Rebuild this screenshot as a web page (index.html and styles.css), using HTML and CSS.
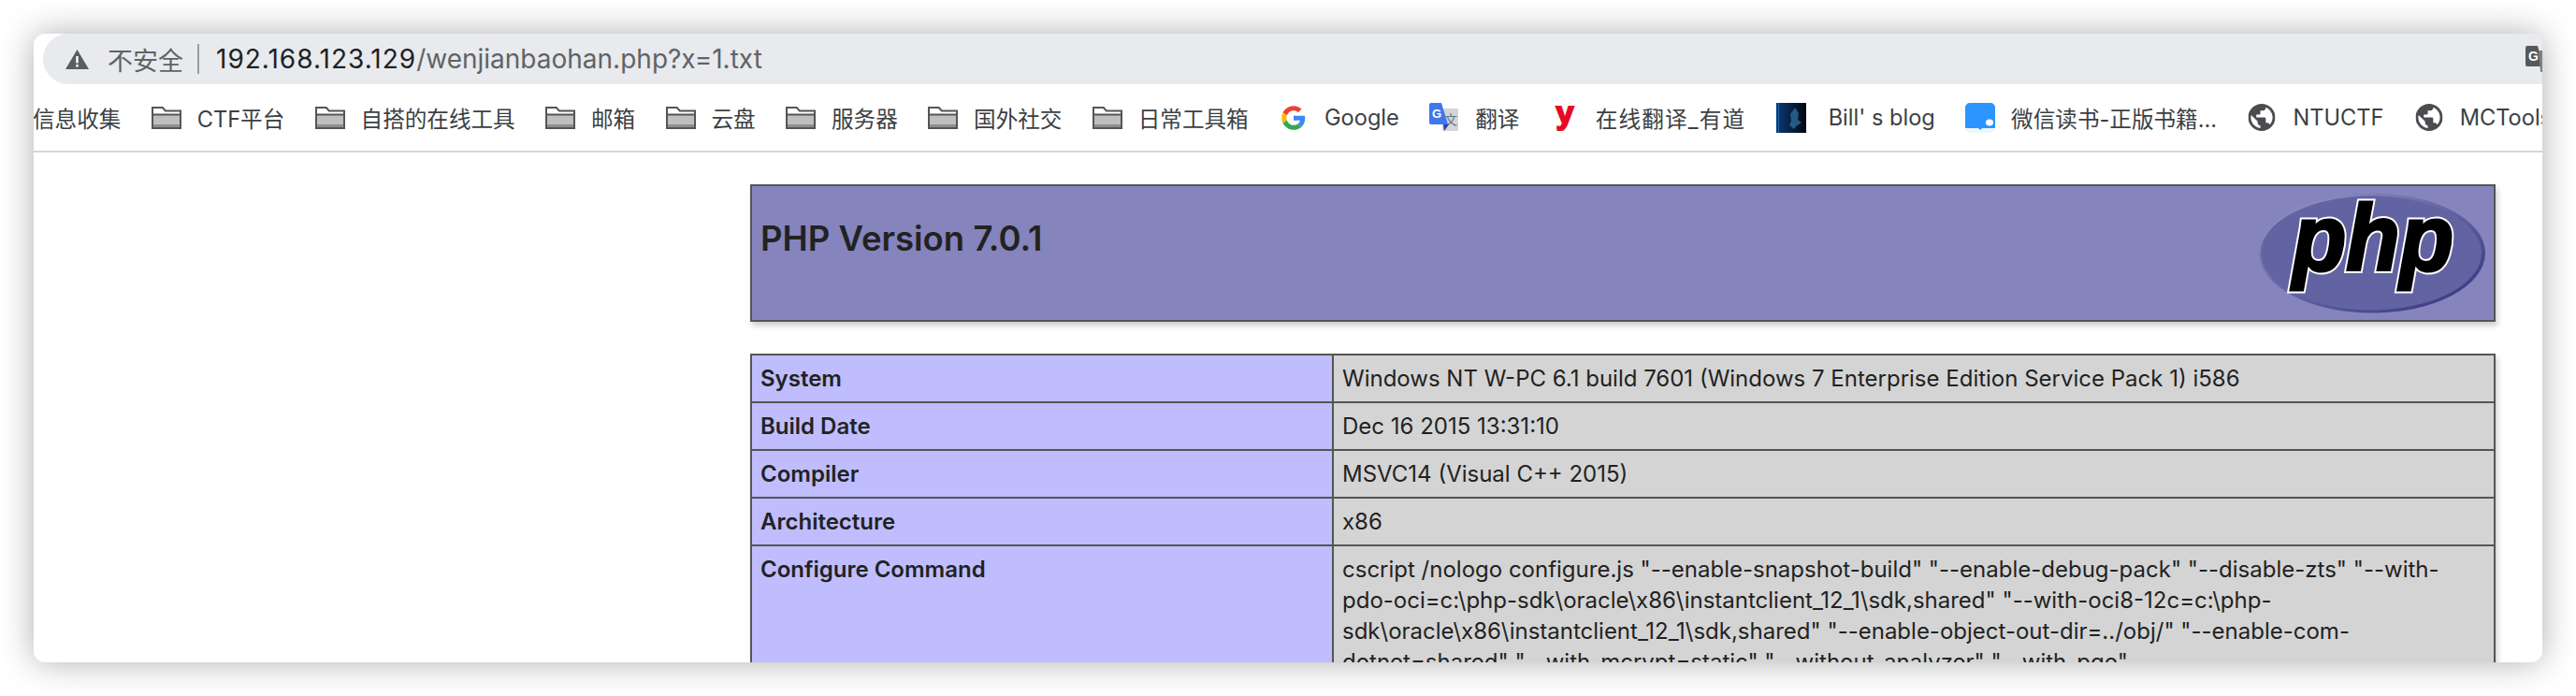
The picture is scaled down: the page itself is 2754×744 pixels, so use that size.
FILE: index.html
```html
<!DOCTYPE html>
<html lang="zh-CN">

<head>
    <meta charset="UTF-8">
    <title>phpinfo()</title>
    <link rel="stylesheet" href="styles.css">
</head>

<body>
    <svg class="defs" width="0" height="0" aria-hidden="true">
        <symbol id="folder" viewBox="0 0 32 24">
            <path d="M1 23V1.5h10.5l3 3H31V23z" fill="#fff" />
            <path d="M2 9h28v14H2z" fill="#bfbfbf" />
            <path d="M2 19h28v4H2z" fill="#8f8f8f" />
            <path d="M1 23V1h10.8l3 3.4H31V23zM1 8.5h30" fill="none" stroke="#555" stroke-width="2" />
        </symbol>
        <symbol id="globe" viewBox="2 2 20 20">
            <path fill="#4a4c4f"
                d="M12 2C6.48 2 2 6.48 2 12s4.48 10 10 10 10-4.48 10-10S17.52 2 12 2zm-1 17.93c-3.95-.49-7-3.85-7-7.93 0-.62.08-1.21.21-1.79L9 15v1c0 1.1.9 2 2 2v1.93zm6.9-2.54c-.26-.81-1-1.39-1.9-1.39h-1v-3c0-.55-.45-1-1-1H8v-2h2c.55 0 1-.45 1-1V7h2c1.1 0 2-.9 2-2v-.41c2.93 1.19 5 4.06 5 7.41 0 2.08-.8 3.97-2.1 5.39z" />
        </symbol>
    </svg>

    <div class="window">
        <!-- address bar -->
        <div class="toolbar">
            <div class="omnibox">
                <svg class="warn" width="25" height="21" viewBox="0 0 25 21">
                    <path d="M12.5 0L25 21H0z" fill="#5a5e63" />
                    <path d="M11.3 7h2.4v7.5h-2.4zM11.3 16h2.4v2.6h-2.4z" fill="#fff" />
                </svg>
                <span class="not-secure">不安全</span>
                <span class="sep"></span>
                <span class="url"><span class="host">192.168.123.129</span>/wenjianbaohan.php?x=1.txt</span>
                <svg class="ext" width="30" height="28" viewBox="0 0 30 28">
                    <path d="M0 2a2 2 0 0 1 2-2h11l6 22H2a2 2 0 0 1-2-2z" fill="#55585c" />
                    <text x="3" y="16" class="ext-g">G</text>
                    <path d="M14 5h14v23H16z" fill="#7d8084" />
                </svg>
            </div>
        </div>

        <!-- bookmarks -->
        <div class="bookmarks">
            <span class="bm"><span>信息收集</span></span>
            <span class="bm"><svg width="32" height="24"><use href="#folder" /></svg><span>CTF平台</span></span>
            <span class="bm"><svg width="32" height="24"><use href="#folder" /></svg><span>自搭的在线工具</span></span>
            <span class="bm"><svg width="32" height="24"><use href="#folder" /></svg><span>邮箱</span></span>
            <span class="bm"><svg width="32" height="24"><use href="#folder" /></svg><span>云盘</span></span>
            <span class="bm"><svg width="32" height="24"><use href="#folder" /></svg><span>服务器</span></span>
            <span class="bm"><svg width="32" height="24"><use href="#folder" /></svg><span>国外社交</span></span>
            <span class="bm"><svg width="32" height="24"><use href="#folder" /></svg><span>日常工具箱</span></span>
            <span class="bm">
                <svg width="32" height="26" viewBox="-6 0 60 48">
                    <path fill="#EA4335" d="M24 9.5c3.54 0 6.71 1.22 9.21 3.6l6.85-6.85C35.9 2.38 30.47 0 24 0 14.62 0 6.51 5.38 2.56 13.22l7.98 6.19C12.43 13.72 17.74 9.5 24 9.5z" />
                    <path fill="#4285F4" d="M46.98 24.55c0-1.57-.15-3.09-.38-4.55H24v9.02h12.94c-.58 2.96-2.26 5.48-4.78 7.18l7.73 6c4.51-4.18 7.09-10.36 7.09-17.65z" />
                    <path fill="#FBBC05" d="M10.53 28.59c-.48-1.45-.76-2.99-.76-4.59s.27-3.14.76-4.59l-7.98-6.19C.92 16.46 0 20.12 0 24c0 3.88.92 7.54 2.56 10.78l7.97-6.19z" />
                    <path fill="#34A853" d="M24 48c6.48 0 11.93-2.13 15.89-5.81l-7.73-6c-2.15 1.45-4.92 2.3-8.16 2.3-6.26 0-11.57-4.22-13.47-9.91l-7.98 6.19C6.51 42.62 14.62 48 24 48z" />
                </svg>
                <span>Google</span>
            </span>
            <span class="bm">
                <svg width="32" height="31" viewBox="0 0 32 31">
                    <rect x="14" y="6" width="17" height="24" rx="1" fill="#d5d5d5" />
                    <text x="16" y="23" class="tr-wen">文</text>
                    <path d="M0 2a2 2 0 0 1 2-2h11l7 23H2a2 2 0 0 1-2-2z" fill="#3f78ee" />
                    <path d="M15 23h6l-5 7z" fill="#2a3fa8" />
                    <text x="3" y="16" class="tr-g">G</text>
                </svg>
                <span>翻译</span>
            </span>
            <span class="bm">
                <svg width="32" height="28" viewBox="0 0 32 28">
                    <text x="16" y="20" class="yd-mark">y</text>
                </svg>
                <span class="youdao">在线翻译_有道</span>
            </span>
            <span class="bm">
                <svg width="32" height="32" viewBox="0 0 32 32">
                    <defs>
                        <linearGradient id="billBg" x1="0" x2="1" y1="0" y2="0">
                            <stop offset="0" stop-color="#0a3a78" />
                            <stop offset=".3" stop-color="#0a2a58" />
                            <stop offset="1" stop-color="#02060c" />
                        </linearGradient>
                    </defs>
                    <rect width="32" height="32" fill="url(#billBg)" />
                    <path d="M15 12l5-7 4 6-1 7 4 3-6 4-2 3-5-4 2-5z" fill="#2c6a96" opacity=".8" />
                    <path d="M2 0h1v32H2z" fill="#1666b8" />
                </svg>
                <span class="bill">Bill' s blog</span>
            </span>
            <span class="bm">
                <svg width="32" height="32" viewBox="0 0 32 32">
                    <rect width="32" height="32" rx="5" fill="#eef6ff" />
                    <path d="M0 5a5 5 0 0 1 5-5h22a5 5 0 0 1 5 5v22H18l-2 2-2-2H0z" fill="#2b95ff" />
                    <ellipse cx="26" cy="21" rx="4" ry="3.4" fill="#fff" />
                </svg>
                <span>微信读书-正版书籍...</span>
            </span>
            <span class="bm"><svg width="32" height="29" viewBox="0 0 32 29"><use href="#globe" x="1.5" width="29" height="29" /></svg><span>NTUCTF</span></span>
            <span class="bm"><svg width="32" height="29" viewBox="0 0 32 29"><use href="#globe" x="1.5" width="29" height="29" /></svg><span>MCTools</span></span>
        </div>

        <!-- page content -->
        <div class="page">
            <div class="php-head">
                <h1>PHP Version 7.0.1</h1>
                <svg class="php-logo" width="242" height="129" viewBox="0 0 242 129">
                    <defs>
                        <linearGradient id="logoRim" x1="0" x2="1" y1="0" y2="1">
                            <stop offset="0" stop-color="#9a9acb" />
                            <stop offset=".5" stop-color="#6263a3" />
                            <stop offset="1" stop-color="#30307a" />
                        </linearGradient>
                    </defs>
                    <ellipse cx="121" cy="64.5" rx="121" ry="64" fill="url(#logoRim)" />
                    <ellipse cx="120" cy="64.5" rx="118" ry="61" fill="#6263a3" />
                    <text x="36" y="83" textLength="172" lengthAdjust="spacingAndGlyphs" class="logo-text logo-halo">php</text>
                    <text x="36" y="83" textLength="172" lengthAdjust="spacingAndGlyphs" class="logo-text">php</text>
                </svg>
            </div>

            <table class="info">
                <tr>
                    <td class="e">System</td>
                    <td class="v">Windows NT W-PC 6.1 build 7601 (Windows 7 Enterprise Edition Service Pack 1) i586</td>
                </tr>
                <tr>
                    <td class="e">Build Date</td>
                    <td class="v">Dec 16 2015 13:31:10</td>
                </tr>
                <tr>
                    <td class="e">Compiler</td>
                    <td class="v">MSVC14 (Visual C++ 2015)</td>
                </tr>
                <tr>
                    <td class="e">Architecture</td>
                    <td class="v">x86</td>
                </tr>
                <tr>
                    <td class="e">Configure Command</td>
                    <td class="v">cscript /nologo configure.js "--enable-snapshot-build" "--enable-debug-pack" "--disable-zts" "--with-<br>pdo-oci=c:\php-sdk\oracle\x86\instantclient_12_1\sdk,shared" "--with-oci8-12c=c:\php-<br>sdk\oracle\x86\instantclient_12_1\sdk,shared" "--enable-object-out-dir=../obj/" "--enable-com-<br>dotnet=shared" "--with-mcrypt=static" "--without-analyzer" "--with-pgo"</td>
                </tr>
            </table>
        </div>
    </div>
</body>

</html>
```

FILE: styles.css
```css
html,
body {
    margin: 0;
    height: 744px;
    overflow: hidden;
    background: #fff;
}

body {
    padding: 36px;
    box-sizing: border-box;
    font-family: Inter, "Noto Sans CJK SC", sans-serif;
}

.defs {
    position: absolute;
}

.window {
    height: 672px;
    background: #fff;
    border-radius: 12px;
    overflow: hidden;
    box-shadow: 0 0 36px rgba(0, 0, 0, 0.32);
}

/* address bar */
.toolbar {
    height: 54px;
    padding-left: 10px;
}

.omnibox {
    height: 54px;
    display: flex;
    align-items: center;
    padding-left: 24px;
    background: #e8eaed;
    border-radius: 27px 0 0 27px;
}

.warn {
    flex-shrink: 0;
}

.not-secure {
    margin-left: 20px;
    font-size: 27px;
    color: #5f6368;
}

.sep {
    width: 2px;
    height: 32px;
    margin: 0 18px 0 15px;
    background: #9a9da1;
}

.url {
    font-family: Inter, sans-serif;
    font-size: 28px;
    color: #5f6368;
}

.host {
    color: #202124;
    letter-spacing: 1px;
}

.ext {
    flex-shrink: 0;
    margin-left: auto;
    margin-right: -12px;
}

.ext-g {
    font: bold 14px "Liberation Sans", sans-serif;
    fill: #fff;
}

/* bookmarks */
.bookmarks {
    height: 71px;
    display: flex;
    align-items: center;
    gap: 32.3px;
    margin-left: -1px;
    overflow: hidden;
    border-bottom: 2px solid #d6d6d6;
    white-space: nowrap;
    font-size: 23.6px;
    color: #3c4043;
}

.bm {
    display: flex;
    flex-shrink: 0;
    align-items: center;
    gap: 17px;
}

.bm svg {
    flex-shrink: 0;
}

.youdao {
    letter-spacing: 1.2px;
}

.bill {
    margin-left: 7px;
}

.yd-mark {
    font: bold 34px "Liberation Sans", sans-serif;
    text-anchor: middle;
    fill: #e60b22;
    stroke: #e60b22;
    stroke-width: 2px;
}

.tr-wen {
    font: 14px "Noto Sans CJK SC", sans-serif;
    fill: #5b7a8c;
}

.tr-g {
    font: bold 13px "Liberation Sans", sans-serif;
    fill: #fff;
}

/* phpinfo */
.page {
    padding: 34px 50px 0 766px;
    font-family: Inter, "Liberation Sans", sans-serif;
    color: #222;
}

.php-head {
    height: 147px;
    box-sizing: border-box;
    display: flex;
    justify-content: space-between;
    padding: 7px 9px;
    background: #8584bd;
    border: 2px solid #555;
    box-shadow: 2px 4px 6px #ccc;
}

.php-head h1 {
    margin: 28px 0 0 0;
    font-size: 36.5px;
    line-height: 42px;
    font-weight: 600;
}

.php-logo {
    flex-shrink: 0;
}

.logo-text {
    font: italic bold 100px "Liberation Sans", sans-serif;
    fill: #000;
    stroke: #000;
    stroke-width: 3px;
}

.logo-halo {
    stroke: #fff;
    stroke-width: 7px;
}

.info {
    width: 100%;
    margin-top: 34px;
    table-layout: fixed;
    border-collapse: collapse;
    box-shadow: 2px 4px 6px #ccc;
}

.info td {
    padding: 8px 9px;
    border: 2px solid #555;
    font-size: 24px;
    line-height: 33px;
    vertical-align: top;
}

.e {
    width: 622px;
    box-sizing: border-box;
    background: #bfbdfd;
    font-weight: 600;
}

.v {
    background: #d4d4d4;
}
```
